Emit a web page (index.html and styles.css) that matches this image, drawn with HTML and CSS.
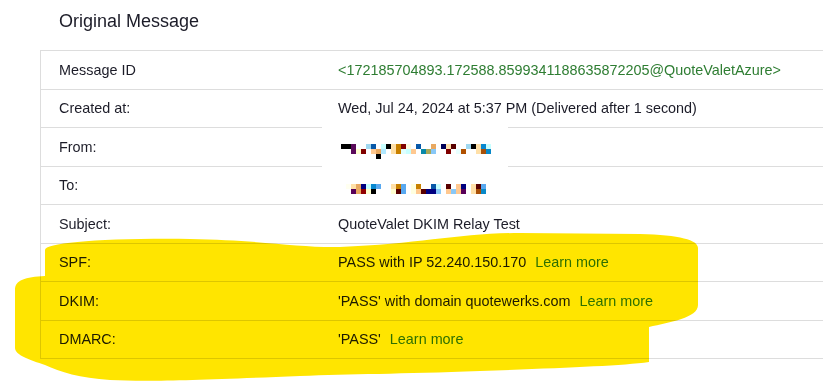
FILE: index.html
```html
<!DOCTYPE html>
<html>
<head>
<meta charset="utf-8">
<link rel="stylesheet" href="styles.css">
</head>
<body>
<div class="page">
  <h1 class="title">Original Message</h1>
  <div class="table">
    <div class="row"><div class="label">Message ID</div><div class="value id">&lt;172185704893.172588.8599341188635872205@QuoteValetAzure&gt;</div></div>
    <div class="row"><div class="label">Created at:</div><div class="value">Wed, Jul 24, 2024 at 5:37 PM (Delivered after 1 second)</div></div>
    <div class="row"><div class="label">From:</div><div class="value"></div></div>
    <div class="row"><div class="label">To:</div><div class="value"></div></div>
    <div class="row"><div class="label">Subject:</div><div class="value">QuoteValet DKIM Relay Test</div></div>
    <div class="row"><div class="label">SPF:</div><div class="value">PASS with IP 52.240.150.170<a class="learn">Learn more</a></div></div>
    <div class="row"><div class="label">DKIM:</div><div class="value">'PASS' with domain quotewerks.com<a class="learn">Learn more</a></div></div>
    <div class="row"><div class="label">DMARC:</div><div class="value">'PASS'<a class="learn">Learn more</a></div></div>
  </div>

  <div class="redact">
    <svg class="mosaic" width="150" height="50" viewBox="0 0 150 50" shape-rendering="crispEdges">
      <rect x="0" y="0" width="10" height="5" fill="#000"/>
      <rect x="10" y="0" width="5" height="5" fill="#5a0a5a"/>
      <rect x="25" y="0" width="5" height="5" fill="#a0d8f0"/>
      <rect x="30" y="0" width="5" height="5" fill="#0858a8"/>
      <rect x="40" y="0" width="5" height="5" fill="#c8ffff"/>
      <rect x="45" y="0" width="5" height="5" fill="#000"/>
      <rect x="50" y="0" width="5" height="5" fill="#ffe0a8"/>
      <rect x="55" y="0" width="5" height="5" fill="#c88000"/>
      <rect x="60" y="0" width="5" height="5" fill="#800000"/>
      <rect x="65" y="0" width="5" height="5" fill="#fffae0"/>
      <rect x="75" y="0" width="5" height="5" fill="#0858a8"/>
      <rect x="90" y="0" width="5" height="5" fill="#e8a860"/>
      <rect x="100" y="0" width="5" height="5" fill="#000058"/>
      <rect x="105" y="0" width="5" height="5" fill="#ffe0a8"/>
      <rect x="110" y="0" width="5" height="5" fill="#580000"/>
      <rect x="125" y="0" width="5" height="5" fill="#a0d8f0"/>
      <rect x="130" y="0" width="5" height="5" fill="#000"/>
      <rect x="135" y="0" width="5" height="5" fill="#ffe0a8"/>
      <rect x="140" y="0" width="5" height="5" fill="#0888d0"/>
      <rect x="145" y="0" width="5" height="5" fill="#c8ffff"/>
      <rect x="10" y="5" width="5" height="5" fill="#5a0a5a"/>
      <rect x="15" y="5" width="5" height="5" fill="#ffffd0"/>
      <rect x="20" y="5" width="5" height="5" fill="#800000"/>
      <rect x="30" y="5" width="5" height="5" fill="#ffc890"/>
      <rect x="35" y="5" width="5" height="5" fill="#e8a860"/>
      <rect x="40" y="5" width="5" height="5" fill="#b0e8ff"/>
      <rect x="50" y="5" width="5" height="5" fill="#ffe0a8"/>
      <rect x="55" y="5" width="5" height="5" fill="#c88000"/>
      <rect x="60" y="5" width="5" height="5" fill="#e0ffff"/>
      <rect x="65" y="5" width="5" height="5" fill="#c8ffff"/>
      <rect x="70" y="5" width="5" height="5" fill="#ffc890"/>
      <rect x="80" y="5" width="5" height="5" fill="#0888a8"/>
      <rect x="85" y="5" width="5" height="5" fill="#a8a858"/>
      <rect x="90" y="5" width="5" height="5" fill="#88c8f8"/>
      <rect x="105" y="5" width="5" height="5" fill="#800000"/>
      <rect x="115" y="5" width="5" height="5" fill="#e8ffff"/>
      <rect x="120" y="5" width="5" height="5" fill="#b05000"/>
      <rect x="135" y="5" width="5" height="5" fill="#ffe0a8"/>
      <rect x="140" y="5" width="5" height="5" fill="#a85008"/>
      <rect x="145" y="5" width="5" height="5" fill="#0888c8"/>
      <rect x="35" y="10" width="5" height="5" fill="#000"/>
      <rect x="5" y="40" width="5" height="5" fill="#fffff0"/>
      <rect x="10" y="40" width="5" height="5" fill="#ffe0a8"/>
      <rect x="15" y="40" width="5" height="5" fill="#e8a860"/>
      <rect x="20" y="40" width="5" height="5" fill="#000080"/>
      <rect x="25" y="40" width="5" height="5" fill="#c8ffff"/>
      <rect x="30" y="40" width="5" height="5" fill="#0888d0"/>
      <rect x="35" y="40" width="5" height="5" fill="#58a8f0"/>
      <rect x="50" y="40" width="5" height="5" fill="#ffe0a8"/>
      <rect x="55" y="40" width="5" height="5" fill="#c88000"/>
      <rect x="60" y="40" width="5" height="5" fill="#58a8f0"/>
      <rect x="70" y="40" width="5" height="5" fill="#ffffe0"/>
      <rect x="75" y="40" width="5" height="5" fill="#c88000"/>
      <rect x="90" y="40" width="5" height="5" fill="#0858a8"/>
      <rect x="95" y="40" width="5" height="5" fill="#c8ffff"/>
      <rect x="105" y="40" width="5" height="5" fill="#580000"/>
      <rect x="115" y="40" width="5" height="5" fill="#ffc890"/>
      <rect x="120" y="40" width="5" height="5" fill="#000080"/>
      <rect x="130" y="40" width="5" height="5" fill="#ffe0a8"/>
      <rect x="135" y="40" width="5" height="5" fill="#580000"/>
      <rect x="140" y="40" width="5" height="5" fill="#58a8f0"/>
      <rect x="10" y="45" width="5" height="5" fill="#580058"/>
      <rect x="15" y="45" width="5" height="5" fill="#e8a860"/>
      <rect x="20" y="45" width="5" height="5" fill="#900000"/>
      <rect x="25" y="45" width="5" height="5" fill="#ffffd0"/>
      <rect x="30" y="45" width="5" height="5" fill="#000"/>
      <rect x="50" y="45" width="5" height="5" fill="#ffffd0"/>
      <rect x="55" y="45" width="5" height="5" fill="#580000"/>
      <rect x="60" y="45" width="5" height="5" fill="#58a8f0"/>
      <rect x="70" y="45" width="5" height="5" fill="#ffffe0"/>
      <rect x="75" y="45" width="5" height="5" fill="#ffc890"/>
      <rect x="80" y="45" width="5" height="5" fill="#580000"/>
      <rect x="85" y="45" width="10" height="5" fill="#000080"/>
      <rect x="95" y="45" width="5" height="5" fill="#88c8f8"/>
      <rect x="105" y="45" width="5" height="5" fill="#ffc890"/>
      <rect x="110" y="45" width="5" height="5" fill="#88c8f8"/>
      <rect x="115" y="45" width="5" height="5" fill="#ffc890"/>
      <rect x="120" y="45" width="5" height="5" fill="#580058"/>
      <rect x="130" y="45" width="5" height="5" fill="#ffe0a8"/>
      <rect x="135" y="45" width="5" height="5" fill="#a85008"/>
      <rect x="140" y="45" width="5" height="5" fill="#0888c8"/>
    </svg>
  </div>

  <svg class="highlight" width="823" height="384" viewBox="0 0 823 384">
    <path fill="#ffe500" d="M45 250 C45 243 100 238 190 239 C260 240 300 248 340 247 C420 244 460 233 520 233 L640 234 C680 235 698 240 698 248 L698 305 C698 318 670 322 649 327 L649 362 C620 366 560 368 480 371 C400 374 350 374 300 376 C200 380 150 382 110 380 C80 378 60 372 45 365 C30 360 15 355 15 348 L15 290 C15 280 25 277 45 276 Z"/>
  </svg>
</div>
</body>
</html>
```

FILE: styles.css
```css
html, body {
  margin: 0;
  padding: 0;
  overflow: hidden;
  background: #fff;
}

.page {
  position: relative;
  width: 823px;
  height: 384px;
  padding-top: 10px;
  box-sizing: border-box;
  font-family: "Liberation Sans", Arial, sans-serif;
  color: #1c1c28;
}

.title {
  margin: 0 0 0 59px;
  font-size: 18px;
  line-height: 22px;
  font-weight: normal;
  color: #1c1c28;
}

.table {
  margin: 18px 0 0 40px;
  width: 820px;
  border-top: 1px solid #dddddd;
  border-left: 1px solid #dddddd;
  border-bottom: 1px solid #dddddd;
}

.row {
  display: grid;
  grid-template-columns: 297px 1fr;
  align-items: center;
  height: 37.5px;
  font-size: 14.4px;
  line-height: 16px;
}

.row + .row {
  border-top: 1px solid #dddddd;
}

.label {
  padding-left: 18px;
}

.value {
  white-space: nowrap;
}

.id {
  color: #2e7d32;
}

.learn {
  color: #2e7d32;
  margin-left: 9px;
  text-decoration: none;
}

.redact {
  position: absolute;
  left: 322px;
  top: 121px;
  width: 186px;
  height: 79px;
  background: #fff;
}

.mosaic {
  position: absolute;
  left: 19px;
  top: 23px;
}

.highlight {
  position: absolute;
  left: 0;
  top: 0;
  mix-blend-mode: multiply;
  pointer-events: none;
}
```
